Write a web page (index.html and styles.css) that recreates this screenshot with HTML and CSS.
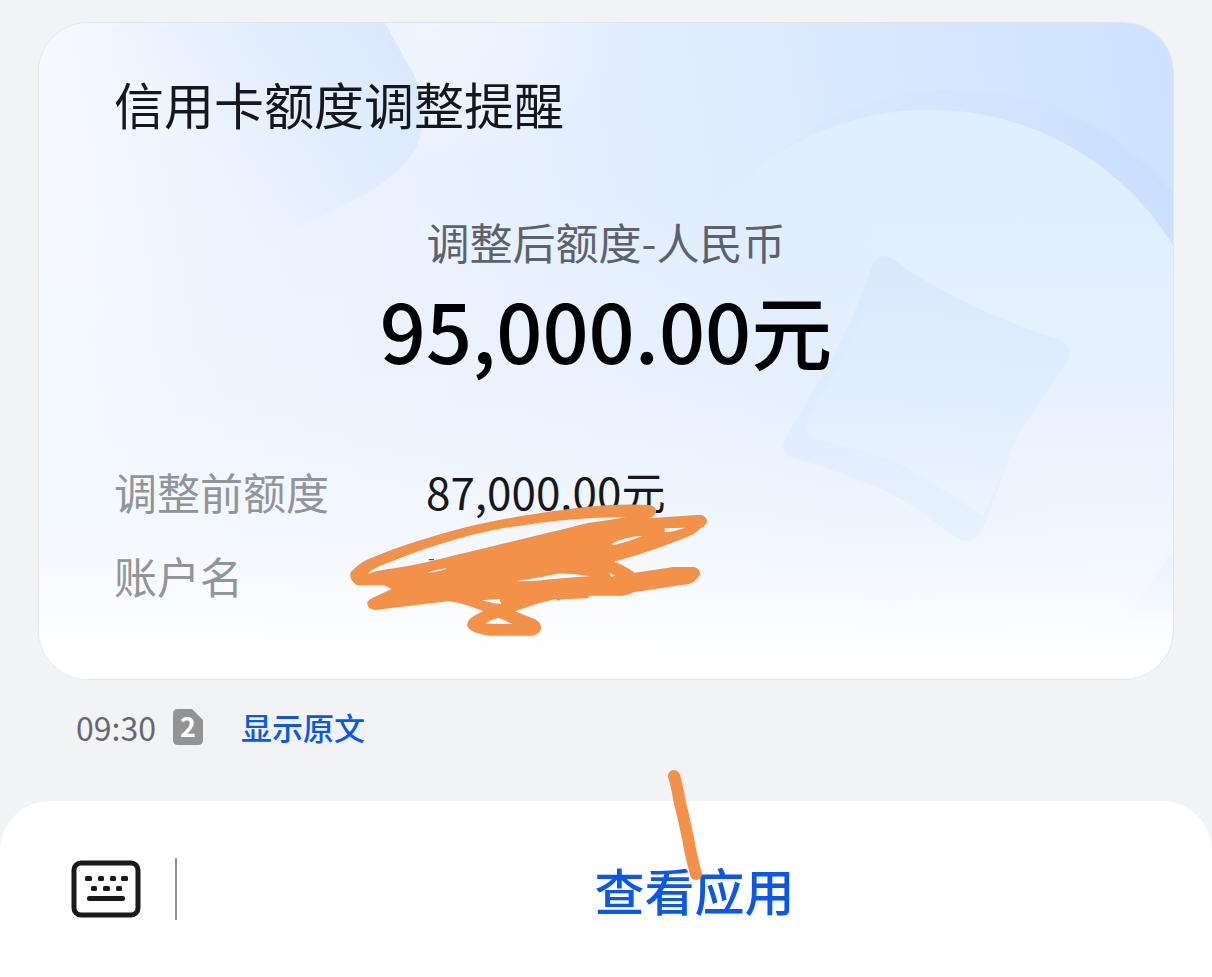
FILE: index.html
```html
<!DOCTYPE html>
<html lang="zh-CN">
<head>
    <meta charset="UTF-8">
    <meta name="viewport" content="width=device-width, initial-scale=1.0">
    <title>信用卡额度调整提醒</title>
    <link rel="stylesheet" href="styles.css">
</head>
<body>
    <main>
        <article class="card">
            <svg class="card-art" viewBox="0 0 1134 658" preserveAspectRatio="none" aria-hidden="true">
                <defs>
                    <linearGradient id="base" x1="0" y1="0.1" x2="1" y2="0">
                        <stop offset="0" stop-color="#f6faff"/>
                        <stop offset="0.12" stop-color="#eef4fe"/>
                        <stop offset="0.35" stop-color="#e8f1fe"/>
                        <stop offset="0.6" stop-color="#deecfe"/>
                        <stop offset="1" stop-color="#cde2fe"/>
                    </linearGradient>
                    <linearGradient id="corner" gradientUnits="userSpaceOnUse" x1="190" y1="170" x2="370" y2="40">
                        <stop offset="0" stop-color="#dae9fd" stop-opacity="0"/>
                        <stop offset="1" stop-color="#dae9fd"/>
                    </linearGradient>
                    <radialGradient id="glow">
                        <stop offset="0" stop-color="#f1f6ff" stop-opacity="0.9"/>
                        <stop offset="1" stop-color="#f1f6ff" stop-opacity="0"/>
                    </radialGradient>
                    <linearGradient id="ring" x1="0" y1="0" x2="1" y2="0">
                        <stop offset="0.15" stop-color="#d2e3ff" stop-opacity="0"/>
                        <stop offset="0.55" stop-color="#d2e3ff" stop-opacity="0.7"/>
                        <stop offset="0.9" stop-color="#c8dfff"/>
                    </linearGradient>
                    <linearGradient id="disc" x1="0.1" y1="0.4" x2="0.4" y2="0.2">
                        <stop offset="0" stop-color="#e2eeff" stop-opacity="0"/>
                        <stop offset="1" stop-color="#e0eefe"/>
                    </linearGradient>
                    <linearGradient id="fade" x1="0" y1="0" x2="0" y2="1">
                        <stop offset="0.25" stop-color="#f0f5ff" stop-opacity="0"/>
                        <stop offset="0.5" stop-color="#f0f5ff" stop-opacity="0.35"/>
                        <stop offset="0.8" stop-color="#f5f9ff" stop-opacity="0.85"/>
                        <stop offset="0.97" stop-color="#ffffff"/>
                    </linearGradient>
                    <linearGradient id="edge" x1="0" y1="0" x2="0" y2="1">
                        <stop offset="0" stop-color="#d6e6fc"/>
                        <stop offset="1" stop-color="#e3f0ff"/>
                    </linearGradient>
                    <linearGradient id="face" x1="0.6" y1="0" x2="0.5" y2="1">
                        <stop offset="0" stop-color="#dae8fc"/>
                        <stop offset="0.5" stop-color="#e1eefe"/>
                        <stop offset="1" stop-color="#eff5fe"/>
                    </linearGradient>
                    <linearGradient id="sliver" x1="0" y1="0" x2="0" y2="1">
                        <stop offset="0" stop-color="#eaf2fe"/>
                        <stop offset="1" stop-color="#eaf2fe" stop-opacity="0"/>
                    </linearGradient>
                </defs>
                <rect width="1134" height="658" fill="url(#base)"/>
                <ellipse cx="390" cy="10" rx="190" ry="130" fill="url(#glow)"/>
                <path d="M0 0H346Q356 18 375 52Q392 90 377 126Q366 146 330 170L240 215H0Z" fill="url(#corner)"/>
                <circle cx="916" cy="347" r="280" fill="url(#ring)"/>
                <circle cx="891" cy="372" r="285" fill="url(#disc)"/>
                <rect width="1134" height="658" fill="url(#fade)"/>
                <path d="M834 241Q838 233 847 234Q853 235 865 245C910 275 965 300 1018 317Q1035 325 1028 339C1016 360 988 396 974 425C962 458 952 490 943 508Q936 522 923 519C905 510 875 480 835 465C805 451 780 444 753 436Q740 430 746 418C776 365 812 310 834 241Z" fill="url(#edge)" opacity="0.7"/>
                <path d="M845 241Q850 234 865 245C910 275 965 300 1018 317Q1035 325 1028 339C1016 360 988 396 974 425C962 458 952 475 944 494C920 480 892 458 862 443C830 430 800 424 775 417Q762 412 770 395C798 344 830 296 845 241Z" fill="url(#face)" opacity="0.7"/>
                <path d="M1134 530L1085 600H1134Z" fill="url(#sliver)" opacity="0.7"/>
            </svg>
            <h1 class="card-title">信用卡额度调整提醒</h1>
            <p class="amount-label">调整后额度-人民币</p>
            <p class="amount">95,000.00元</p>
            <dl class="details">
                <dt>调整前额度</dt>
                <dd>87,000.00元</dd>
                <dt>账户名</dt>
                <dd></dd>
            </dl>
            <svg class="scribble" viewBox="0 0 1200 600" aria-hidden="true">
                <path d="M266 332h16M320 357h8" stroke="#333" stroke-width="3"/>
                <path fill="#f39149" fill-rule="evenodd" d="M50 408Q26 392 32 370Q60 340 86 330C180 290 280 260 380 234C500 205 640 186 740 173Q840 164 930 168Q952 174 948 190Q942 204 926 208L1080 197Q1100 200 1101 217Q1096 232 1083 237L1060 256C990 285 910 315 822 338C850 348 870 360 884 371L1000 354H1062Q1082 360 1080 378L1060 400Q1045 408 1030 407L880 430Q860 440 848 440H750L742 448L664 451L656 455L648 451Q610 456 525 487L585 511Q606 522 603 540Q598 556 576 560H450Q400 554 384 536Q376 522 392 508Q405 497 430 487Q380 465 328 456L105 483Q80 480 82 460Q88 450 98 446L155 420L132 409ZM86 372Q100 358 132 346C280 286 420 245 540 230C660 212 770 203 858 205Q800 215 744 222C600 258 420 300 290 332Q220 350 130 362Q98 368 86 374ZM262 371Q290 360 326 357Q296 370 262 371ZM815 284Q850 264 908 260Q860 280 820 288ZM974 238L1036 236Q1000 248 974 250ZM528 397Q580 388 652 374Q700 372 750 382Q650 388 580 396ZM808 372L826 380L814 384ZM425 454L478 450L484 465Q455 463 425 454ZM437 524Q450 512 476 506L518 525Z"/>
            </svg>
        </article>
        <div class="meta">
            <time class="time">09:30</time>
            <svg class="sim" viewBox="0 0 30 36" role="img" aria-label="SIM 2">
                <path d="M5 0H19L30 11V31Q30 36 25 36H5Q0 36 0 31V5Q0 0 5 0Z" fill="#929394"/>
                <text class="sim-number" x="15" y="28" text-anchor="middle">2</text>
            </svg>
            <a class="original" href="#">显示原文</a>
        </div>
    </main>
    <footer class="toolbar">
        <button class="keyboard" type="button" aria-label="键盘">
            <svg viewBox="0 0 70 58" aria-hidden="true">
                <rect x="3" y="3" width="64" height="52" rx="7" fill="none" stroke="#1a1a1a" stroke-width="5"/>
                <g fill="#1a1a1a">
                    <rect x="14" y="16" width="7" height="5" rx="1.5"/>
                    <rect x="27" y="16" width="6" height="5" rx="1.5"/>
                    <rect x="39" y="16" width="6" height="5" rx="1.5"/>
                    <rect x="50" y="16" width="7" height="5" rx="1.5"/>
                    <rect x="20" y="26" width="6" height="5" rx="1.5"/>
                    <rect x="32" y="26" width="7" height="5" rx="1.5"/>
                    <rect x="45" y="26" width="6" height="5" rx="1.5"/>
                    <rect x="16" y="36" width="38" height="5" rx="2"/>
                </g>
            </svg>
        </button>
        <button class="open-app" type="button">查看应用</button>
        <svg class="stroke" viewBox="0 0 260 180" aria-hidden="true">
            <path d="M114 16C118 28 118 35 120 43C124 58 126 70 128 78C130 92 133 103 136 114" fill="none" stroke="#f39149" stroke-width="12" stroke-linecap="round" stroke-linejoin="round"/>
        </svg>
    </footer>
</body>
</html>
```

FILE: styles.css
```css
* {
    box-sizing: border-box;
}
body {
    display: flex;
    flex-direction: column;
    min-height: 100vh;
    margin: 0;
    background-color: #f1f3f5;
    color: #14181c;
    font-family: "Noto Sans CJK SC", sans-serif;
}
main {
    flex: 1;
    padding: 22px 38px 0;
}
.card {
    position: relative;
    padding: 46px 75px 72px;
    border: 1px solid #e1e5ea;
    border-radius: 50px;
    overflow: hidden;
    background-color: #ffffff;
}
.card-art {
    position: absolute;
    top: 0;
    left: 0;
    width: 100%;
    height: 100%;
}
.card-title,
.amount-label,
.amount,
.details {
    position: relative;
    margin: 0;
}
.card-title {
    font-size: 50px;
    line-height: 68px;
    font-weight: 400;
}
.amount-label {
    margin-top: 72px;
    color: #5b626b;
    font-size: 43px;
    line-height: 64px;
    text-align: center;
}
.amount {
    color: #000000;
    font-size: 81px;
    line-height: 112px;
    font-weight: 500;
    text-align: center;
}
.details {
    display: grid;
    grid-template-columns: 312px 1fr;
    row-gap: 20px;
    margin-top: 74px;
    font-size: 43px;
    line-height: 64px;
}
.details dt {
    color: #919499;
}
.details dd {
    margin: 0;
    font-size: 44px;
}
.scribble {
    position: absolute;
    left: 301px;
    bottom: 30px;
    width: 400px;
    height: 200px;
}
.meta {
    display: flex;
    align-items: center;
    padding: 24px 38px;
    font-size: 31px;
    line-height: 46px;
}
.time {
    color: #66696c;
    font-size: 32px;
}
.sim {
    width: 30px;
    height: 36px;
    margin-left: 17px;
    overflow: visible;
}
.sim-number {
    fill: #ffffff;
    font-size: 27px;
    font-weight: 700;
}
.original {
    margin-left: 38px;
    color: #0b57e9;
    font-weight: 500;
    text-decoration: none;
}
.toolbar {
    position: relative;
    display: flex;
    align-items: center;
    height: 176px;
    padding: 0 0 0 71px;
    border-radius: 50px 50px 0 0;
    background-color: #ffffff;
}
button {
    padding: 0;
    border: none;
    background: none;
    font-family: inherit;
    cursor: pointer;
}
.keyboard {
    display: flex;
    align-items: center;
    width: 106px;
    height: 62px;
    border-right: 2px solid #929394;
}
.keyboard svg {
    width: 70px;
    height: 58px;
}
.open-app {
    flex: 1;
    color: #0b57e9;
    font-size: 50px;
    line-height: 72px;
    font-weight: 500;
}
.stroke {
    position: absolute;
    left: calc(50% - 46px);
    top: -41px;
    width: 260px;
    height: 180px;
    pointer-events: none;
}
```
